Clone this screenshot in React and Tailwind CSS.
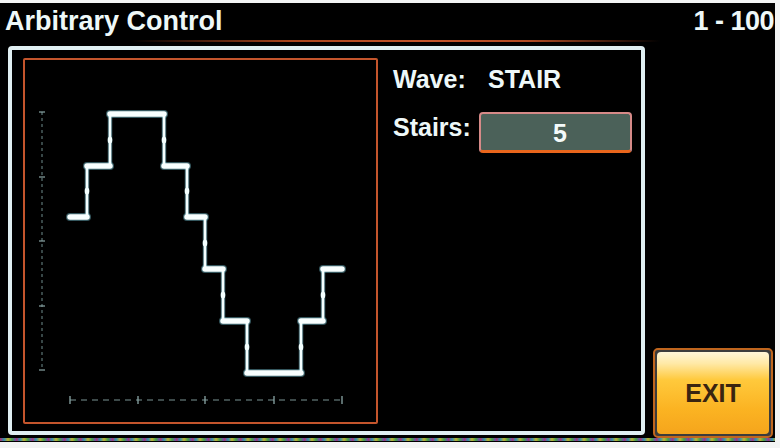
const font = { fontFamily: '"Liberation Sans", Arial, sans-serif' };

const STEPS_H = [
  [70, 87, 217],
  [87, 110, 166],
  [110, 164, 114],
  [164, 187, 166],
  [187, 205, 217],
  [205, 223, 269],
  [223, 247, 321],
  [247, 301, 373],
  [301, 323, 321],
  [323, 342, 269],
];

const DOTS = [
  [87, 191],
  [110, 140],
  [164, 140],
  [187, 191],
  [205, 243],
  [223, 295],
  [247, 347],
  [301, 347],
  [323, 295],
];

const wavePath =
  "M70 217 H87 V166 H110 V114 H164 V166 H187 V217 H205 V269 H223 V321 H247 V373 H301 V321 H323 V269 H342";

function StairChart() {
  const yMajor = [112, 177, 241, 306, 370];
  const xMajor = [70, 138, 205, 274, 342];
  return (
    <svg viewBox="25 60 351 362" className="w-full h-full">
      {/* y axis */}
      <line x1="42" y1="112" x2="42" y2="370" stroke="#6f8c8c" strokeWidth="1" strokeDasharray="3 3" />
      {yMajor.map((y) => (
        <line key={y} x1="39" y1={y} x2="45" y2={y} stroke="#8aa6a6" strokeWidth="1.2" />
      ))}
      {/* x axis */}
      <line x1="70" y1="400" x2="342" y2="400" stroke="#7a9494" strokeWidth="1.2" strokeDasharray="6 5" />
      {xMajor.map((x) => (
        <line key={x} x1={x} y1="396" x2={x} y2="404" stroke="#8aa6a6" strokeWidth="1.3" />
      ))}
      {/* wave glow */}
      <path d={wavePath} fill="none" stroke="#5f9fae" strokeWidth="4.5" strokeOpacity="0.6" />
      {STEPS_H.map(([a, b, y]) => (
        <line key={`g${a}`} x1={a} y1={y} x2={b} y2={y} stroke="#6aaebc" strokeWidth="8" strokeOpacity="0.5" strokeLinecap="round" />
      ))}
      {/* wave */}
      <path d={wavePath} fill="none" stroke="#f4ffff" strokeWidth="2.6" />
      {STEPS_H.map(([a, b, y]) => (
        <line key={a} x1={a} y1={y} x2={b} y2={y} stroke="#f8ffff" strokeWidth="5.5" strokeLinecap="round" />
      ))}
      {DOTS.map(([x, y]) => (
        <ellipse key={`${x}-${y}`} cx={x} cy={y} rx="2.3" ry="3.5" fill="#f4ffff" />
      ))}
    </svg>
  );
}

export default function App() {
  return (
    <div className="w-[780px] h-[448px] bg-[#f3f4f4] overflow-hidden" style={font}>
      <div className="mt-[3px] w-[775px] h-[439px] bg-black flex flex-col overflow-hidden">
        {/* header */}
        <div className="h-[37px] flex items-start pt-[3px] pl-[5px] pr-[1px] text-[27px] leading-[30px] font-bold text-[#eef8f8]">
          <span>Arbitrary Control</span>
          <span className="ml-auto tracking-[-0.5px]">1 - 100</span>
        </div>
        <div className="h-[2px] ml-[130px] w-[530px] bg-[linear-gradient(90deg,transparent,#a8441c_30%,#c4542a_55%,#b24a22_75%,transparent)]"></div>

        {/* content */}
        <div className="mt-[4px] h-[392px] flex items-start">
          <div className="ml-[8px] w-[637px] h-[389px] border-4 border-[#e0eff2] rounded-[4px] flex items-start pl-[11px] pt-[8px]">
            <div className="w-[355px] h-[366px] border-2 border-[#c4552c] rounded-[2px]">
              <StairChart />
            </div>
            <div className="ml-[15px] flex flex-col text-[25px] leading-[30px] font-bold text-[#eef8f8]">
              <div className="mt-[6px] flex">
                <span className="w-[95px]">Wave:</span>
                <span>STAIR</span>
              </div>
              <div className="mt-[18px] flex items-start">
                <span className="w-[86px]">Stairs:</span>
                <div className="w-[153px] h-[41px] rounded-[4px] border-2 border-[#d68a88] border-b-[3px] border-b-[#ea661c] bg-[#4b6159] flex items-center justify-center pl-[9px] pt-[1px] text-[25px] text-[#f4fafa]">
                  5
                </div>
              </div>
            </div>
          </div>
          <div className="ml-[8px] self-end w-[120px] h-[90px] rounded-[5px] border-2 border-[#c0661e] bg-[#3c3c3c] p-[2px]">
            <div className="w-full h-full rounded-[4px] bg-[linear-gradient(180deg,#fff6d8_0%,#ffe9a6_14%,#ffc93c_34%,#fbb322_70%,#f5a51c_100%)] flex items-center justify-center pt-[2px] text-[25px] font-bold text-[#3a2410]">
              EXIT
            </div>
          </div>
        </div>
        <div className="h-[3px] bg-[repeating-linear-gradient(90deg,#b03070_0px,#3090b0_4px,#c0b030_8px,#40a050_12px,#8040b0_16px)]"></div>
      </div>
    </div>
  );
}
